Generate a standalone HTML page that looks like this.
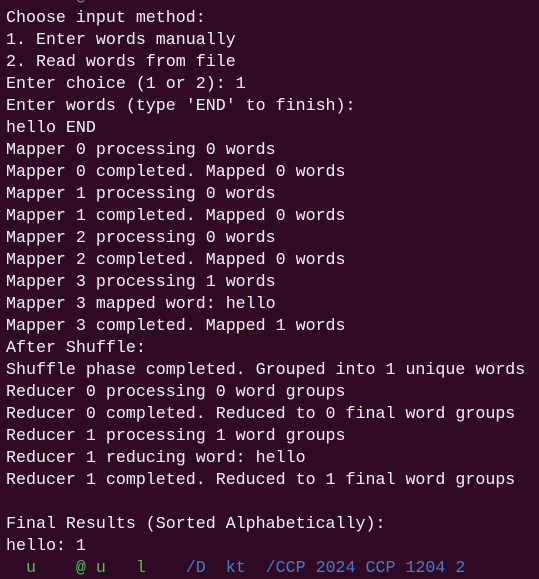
<!DOCTYPE html>
<html><head><style>
html,body{margin:0;padding:0;background:#300a24;width:539px;height:561px;overflow:hidden}
pre{margin:0;position:absolute;left:6px;top:-15px;font-family:"Liberation Mono",monospace;font-size:16.65px;line-height:22px;color:#f2f2f2;white-space:pre}
.g{color:#4ec24e}.b{color:#3f7fd0}
</style></head><body>
<pre><span class="g">  u    @ u</span>           <span class="b">/    /</span>
Choose input method:
1. Enter words manually
2. Read words from file
Enter choice (1 or 2): 1
Enter words (type 'END' to finish):
hello END
Mapper 0 processing 0 words
Mapper 0 completed. Mapped 0 words
Mapper 1 processing 0 words
Mapper 1 completed. Mapped 0 words
Mapper 2 processing 0 words
Mapper 2 completed. Mapped 0 words
Mapper 3 processing 1 words
Mapper 3 mapped word: hello
Mapper 3 completed. Mapped 1 words
After Shuffle:
Shuffle phase completed. Grouped into 1 unique words
Reducer 0 processing 0 word groups
Reducer 0 completed. Reduced to 0 final word groups
Reducer 1 processing 1 word groups
Reducer 1 reducing word: hello
Reducer 1 completed. Reduced to 1 final word groups

Final Results (Sorted Alphabetically):
hello: 1
<span class="g">  u    @ u   l  </span>  <span class="b">/D  kt  /CCP 2024 CCP 1204 2</span></pre>
</body></html>
